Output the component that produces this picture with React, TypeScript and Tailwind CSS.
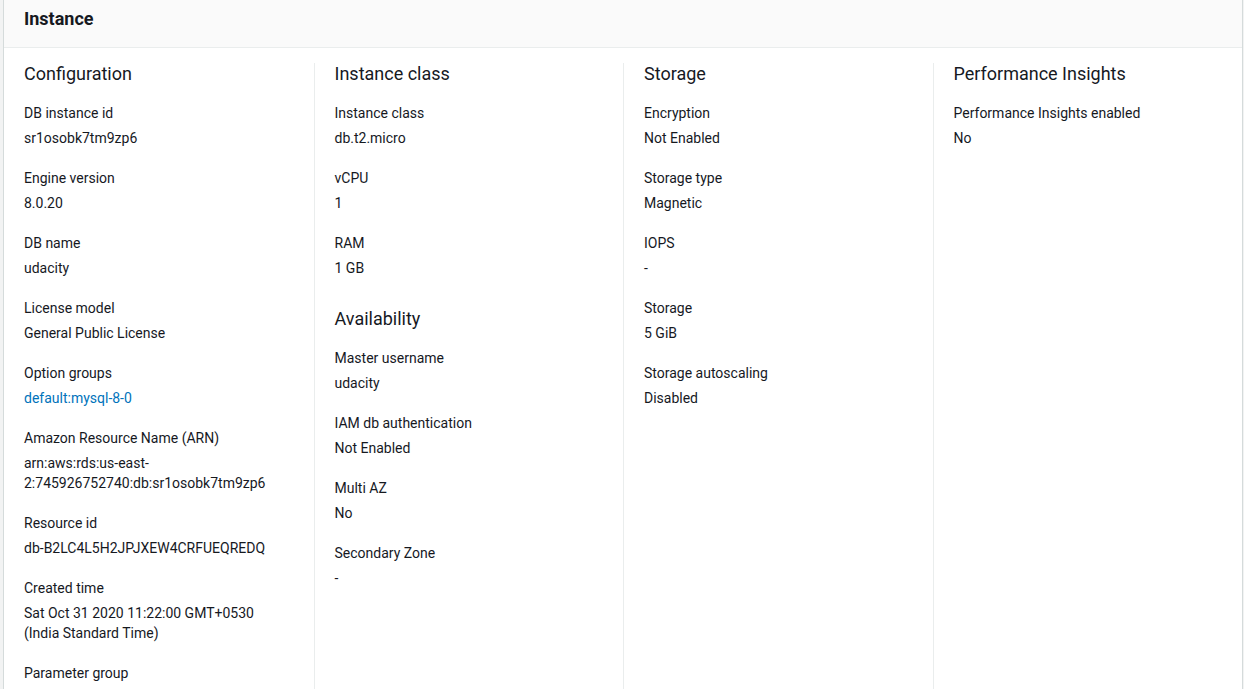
import React from 'react';

type Item = { label: string; value: string[]; link?: boolean };
type Section = { title: string; items: Item[] };

const columns: Section[][] = [
    [
        {
            title: 'Configuration',
            items: [
                { label: 'DB instance id', value: ['sr1osobk7tm9zp6'] },
                { label: 'Engine version', value: ['8.0.20'] },
                { label: 'DB name', value: ['udacity'] },
                { label: 'License model', value: ['General Public License'] },
                { label: 'Option groups', value: ['default:mysql-8-0'], link: true },
                { label: 'Amazon Resource Name (ARN)', value: ['arn:aws:rds:us-east-', '2:745926752740:db:sr1osobk7tm9zp6'] },
                { label: 'Resource id', value: ['db-B2LC4L5H2JPJXEW4CRFUEQREDQ'] },
                { label: 'Created time', value: ['Sat Oct 31 2020 11:22:00 GMT+0530', '(India Standard Time)'] },
                { label: 'Parameter group', value: [] },
            ],
        },
    ],
    [
        {
            title: 'Instance class',
            items: [
                { label: 'Instance class', value: ['db.t2.micro'] },
                { label: 'vCPU', value: ['1'] },
                { label: 'RAM', value: ['1 GB'] },
            ],
        },
        {
            title: 'Availability',
            items: [
                { label: 'Master username', value: ['udacity'] },
                { label: 'IAM db authentication', value: ['Not Enabled'] },
                { label: 'Multi AZ', value: ['No'] },
                { label: 'Secondary Zone', value: ['-'] },
            ],
        },
    ],
    [
        {
            title: 'Storage',
            items: [
                { label: 'Encryption', value: ['Not Enabled'] },
                { label: 'Storage type', value: ['Magnetic'] },
                { label: 'IOPS', value: ['-'] },
                { label: 'Storage', value: ['5 GiB'] },
                { label: 'Storage autoscaling', value: ['Disabled'] },
            ],
        },
    ],
    [
        {
            title: 'Performance Insights',
            items: [{ label: 'Performance Insights enabled', value: ['No'] }],
        },
    ],
];

const App: React.FC = () => {
    return (
        <div className="min-h-screen bg-[#f2f3f3] pl-[3px] pr-[1px] font-['Roboto',sans-serif] text-[#16191f]">
            <div className="min-h-screen flex flex-col bg-white border-x border-[#d5dbdb]">
                <div className="h-[48px] bg-[#fafafa] border-b border-[#eaeded] px-5 pt-[8px]">
                    <h2 className="text-[18px] leading-[22px] font-bold">Instance</h2>
                </div>

                <div className="flex-1 grid grid-cols-4 pt-[15px]">
                    {columns.map((sections, ci) => (
                        <div
                            key={ci}
                            className={ci === 0 ? 'pl-5 pr-4' : 'border-l border-[#eaeded] pl-5 pr-4'}
                        >
                            {sections.map((s, si) => (
                                <div key={s.title} className={si > 0 ? 'mt-[30px]' : ''}>
                                    <h3 className="text-[18px] leading-[22px] mb-[18px]">{s.title}</h3>
                                    {s.items.map((it) => (
                                        <div key={it.label} className="mb-5 text-[14px] leading-5">
                                            <div>{it.label}</div>
                                            {it.value.length > 0 && (
                                                <div className={'mt-[5px] ' + (it.link ? 'text-[#0073bb]' : '')}>
                                                    {it.value.map((v) => (
                                                        <div key={v}>{v}</div>
                                                    ))}
                                                </div>
                                            )}
                                        </div>
                                    ))}
                                </div>
                            ))}
                        </div>
                    ))}
                </div>
            </div>
        </div>
    );
};

export default App;
